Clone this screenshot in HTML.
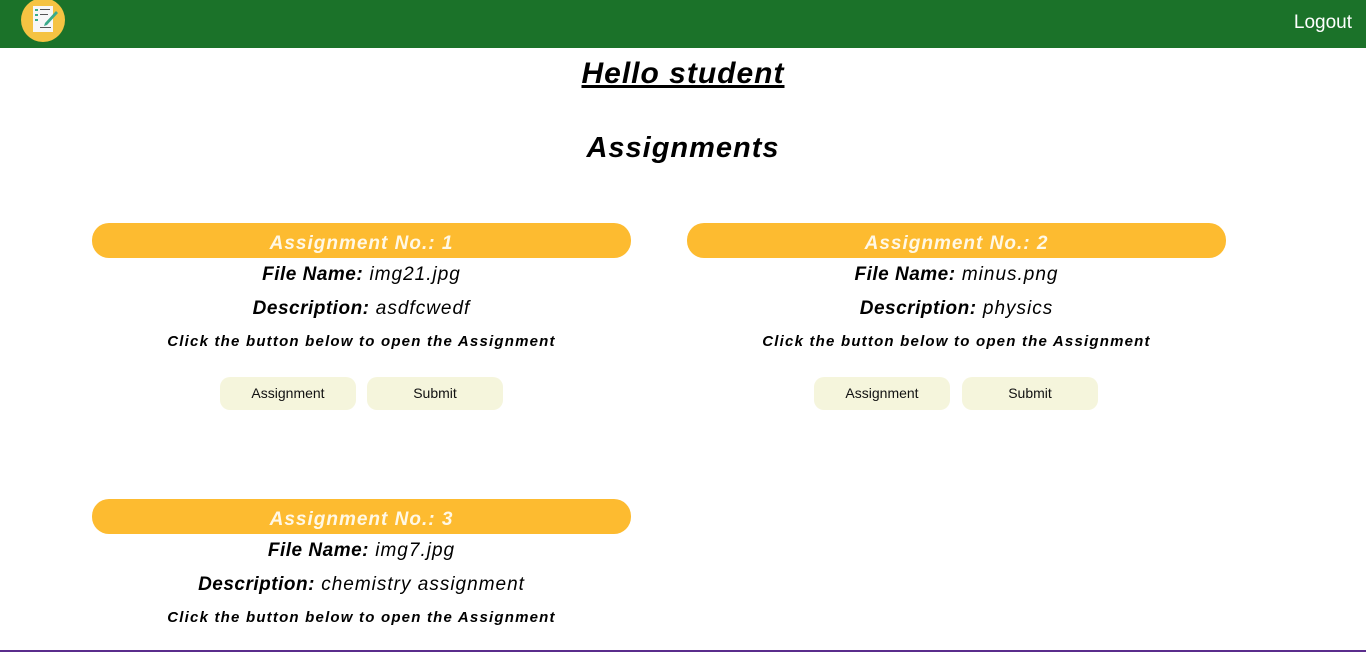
<!DOCTYPE html>
<html><head><style>
body{margin:0;width:1366px;height:652px;overflow:hidden;background:#fff;font-family:"Liberation Sans",sans-serif;position:relative}
.hdr{position:absolute;left:0;top:0;width:1366px;height:48px;background:#1b7229}
.logo{position:absolute;left:21px;top:-2px;width:44px;height:44px;border-radius:50%;background:#f5c342}
.paper{position:absolute;left:12px;top:8px;width:20px;height:26px;background:#f7f7f7}
.logout{position:absolute;right:14px;top:12px;color:#fff;font-size:19px}
.t{position:absolute;left:0;width:1366px;text-align:center;font-style:italic;font-weight:bold;letter-spacing:1px}
.card{position:absolute;width:539px;text-align:center;font-style:italic}
.bar{height:35px;border-radius:17px;background:#fdbb30;color:#fff8e6;font-weight:bold;font-size:19px;line-height:42px;letter-spacing:1px}
.l{font-size:19px;letter-spacing:1px;height:34px;line-height:34px}
.l b{letter-spacing:.5px}
.c{font-weight:bold;font-size:15px;letter-spacing:1.2px;margin-top:7px}
.btn{position:absolute;top:154px;width:136px;height:33px;border-radius:10px;background:#f5f5dc;font-style:normal;font-size:14px;line-height:33px;color:#111}
.foot{position:absolute;left:0;top:650px;width:1366px;height:2px;background:#5a2d8c}
</style></head><body>
<div class="hdr"><div class="logo"><div class="paper"></div>
<svg style="position:absolute;left:12px;top:8px" width="26" height="26" viewBox="0 0 26 26"><g fill="#3aaa8a"><rect x="2" y="3" width="3" height="2"/><rect x="2" y="8" width="3" height="2"/><rect x="2" y="13" width="3" height="2"/></g><g fill="#555"><rect x="7" y="3" width="10" height="1"/><rect x="7" y="8" width="8" height="1"/><rect x="7" y="21" width="11" height="1"/></g><path d="M12 17 L23 5 L25 7 L14 19 L11 20 Z" fill="#3aaa8a"/></svg></div>
<div class="logout">Logout</div></div>
<div class="t" style="top:57px;font-size:30px"><span style="text-decoration:underline">Hello student</span></div>
<div class="t" style="top:132px;font-size:29px">Assignments</div>

<div class="card" style="left:92px;top:223px"><div class="bar">Assignment No.: 1</div>
<div class="l"><b>File Name:</b> img21.jpg</div><div class="l"><b>Description:</b> asdfcwedf</div>
<div class="c">Click the button below to open the Assignment</div>
<div class="btn" style="left:128px">Assignment</div><div class="btn" style="left:275px">Submit</div></div>

<div class="card" style="left:687px;top:223px"><div class="bar">Assignment No.: 2</div>
<div class="l"><b>File Name:</b> minus.png</div><div class="l"><b>Description:</b> physics</div>
<div class="c">Click the button below to open the Assignment</div>
<div class="btn" style="left:127px">Assignment</div><div class="btn" style="left:275px">Submit</div></div>

<div class="card" style="left:92px;top:499px"><div class="bar">Assignment No.: 3</div>
<div class="l"><b>File Name:</b> img7.jpg</div><div class="l"><b>Description:</b> chemistry assignment</div>
<div class="c">Click the button below to open the Assignment</div></div>
<div class="foot"></div>
</body></html>
